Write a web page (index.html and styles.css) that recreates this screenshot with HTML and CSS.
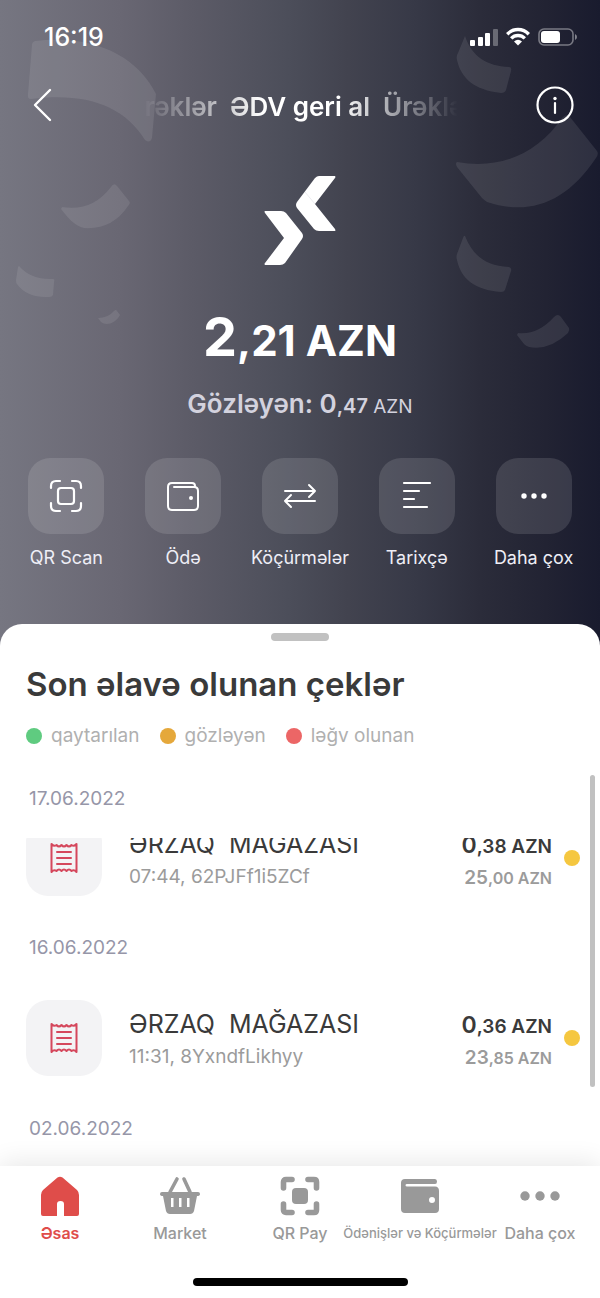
FILE: index.html
```html
<!DOCTYPE html>
<html lang="az">
<head>
<meta charset="utf-8">
<meta name="viewport" content="width=device-width, initial-scale=1">
<title>ƏDV geri al</title>
<link rel="stylesheet" href="styles.css">
</head>
<body>
<header class="hero">
  <svg class="confetti" viewBox="0 0 600 624" aria-hidden="true">
    <g fill="#fff" fill-opacity=".09">
      <path d="M35 41C92 34 137 55 156 94L152 138Q150 144 145 140C124 105 84 92 31 99Q27 99 28 94L32 45Q32 42 35 41Z"/>
      <path d="M62 207Q92 212 111 187Q114 182 117 186L129 201Q131 203 128 206Q112 230 84 228C75 226 68 218 61 209Z"/>
      <path d="M19 266Q31 280 53 279Q55 279 54 282L53 295Q52 297 49 297Q27 298 17 284Q16 283 16 280L18 267Z"/>
      <path d="M98 318Q108 318 114 311Q116 309 117 311L120 315C115 324 106 326 101 322Z"/>
      <path d="M465 36C472 57 487 66 509 67Q512 67 511 71L506 90Q505 93 501 93C474 90 461 78 457 60Q456 56 458 53Z"/>
      <path d="M457 162C501 170 538 153 562 118Q566 113 570 117L597 151Q599 154 596 158C566 203 529 216 487 202Q484 200 482 198L457 167Q455 163 457 162Z"/>
      <path d="M465 236C473 256 486 266 509 267Q512 268 511 271L505 290Q504 292 501 292C475 290 461 279 457 260Q456 257 457 254L463 238Q464 235 465 236Z"/>
      <path d="M518 333Q538 335 554 317Q558 313 561 317L569 328Q570 330 568 333Q549 351 529 347Q526 346 524 344L517 335Z"/>
    </g>
  </svg>

  <div class="status">
    <span class="clock">16:19</span>
    <div class="signals" aria-hidden="true">
      <svg width="28" height="20" viewBox="0 0 28 20" fill="#fff">
        <rect x="0" y="13" width="5" height="6" rx="1"/><rect x="8" y="10" width="5" height="9" rx="1"/><rect x="15" y="6" width="5" height="13" rx="1"/><rect x="23" y="2" width="5" height="17" rx="1" opacity=".3"/>
      </svg>
      <svg width="24" height="20" viewBox="0 0 24 20" fill="none" stroke="#fff" stroke-width="3.4">
        <path d="M1.200 7.200C7.200 1 16.800 1 22.800 7.200M5.200 11.400C9 7.600 15 7.600 18.800 11.400"/><path d="M8 14.400Q12 11.200 16 14.400L12 18.600Z" fill="#fff" stroke="none"/>
      </svg>
      <svg width="40" height="20" viewBox="0 0 40 20">
        <rect x="1" y="2" width="34" height="16" rx="5" fill="none" stroke="#fff" stroke-opacity=".4" stroke-width="1.600"/><rect x="3" y="4" width="19" height="12" rx="3" fill="#fff"/><path d="M37 7Q39 8 39 10T37 13Z" fill="#fff" opacity=".45"/>
      </svg>
    </div>
  </div>

  <div class="navbar">
    <button class="icon-button" type="button" aria-label="Geri">
      <svg width="40" height="40" viewBox="0 0 40 40" fill="none" stroke="#fff" stroke-width="2.400" stroke-linecap="round" stroke-linejoin="round"><path d="M25 5 10 20 25 35"/></svg>
    </button>
    <h1 class="ticker"><span>Ürəklər&nbsp; ƏDV geri al&nbsp; Ürəklər</span></h1>
    <button class="icon-button" type="button" aria-label="Məlumat">
      <svg width="40" height="40" viewBox="0 0 40 40" fill="none" stroke="#fff" stroke-width="2.200" stroke-linecap="round"><circle cx="20" cy="20" r="17.500"/><path d="M20 18V28"/><circle cx="20" cy="13.500" r="1.700" fill="#fff" stroke="none"/></svg>
    </button>
  </div>

  <svg class="logo" width="72" height="92" viewBox="0 0 72 92" fill="#fff" aria-hidden="true">
    <path d="M1 36H17Q20 36 22 38L38 58Q40 61 38 64L21 88Q19 90 16 90H1Q0 89 1 88L20 63 1 38Q0 36 1 36Z"/>
    <path d="M55 1H71Q72 2 71 3L51 29 71 54Q72 56 71 56H55Q52 56 50 54L33 33Q31 30 33 27L51 3Q53 1 55 1Z"/>
    <path d="M41 17 51 29" stroke="#e4e4ea" stroke-width=".7"/>
  </svg>

  <p class="balance"><span class="whole">2</span>,21 AZN</p>
  <p class="pending"><span class="pending-main">Gözləyən: 0</span><span class="pending-cents">,47</span> AZN</p>

  <div class="actions">
    <button class="action" type="button">
      <span class="action-tile"><svg width="34" height="34" viewBox="0 0 34 34" fill="none" stroke="#fff" stroke-width="2.200" stroke-linecap="round" stroke-linejoin="round"><path d="M2 9V7Q2 2 7 2H11M23 2H27Q32 2 32 7V9M32 24V27Q32 32 27 32H23M11 32H7Q2 32 2 27V24"/><rect x="9" y="9" width="16" height="16" rx="3"/></svg></span>
      <span>QR Scan</span>
    </button>
    <button class="action" type="button">
      <span class="action-tile"><svg width="34" height="34" viewBox="0 0 34 34" fill="none" stroke="#fff" stroke-width="2" stroke-linecap="round" stroke-linejoin="round"><path d="M29 8V7Q29 4 26 4H6Q2 4 2 8V27Q2 31 6 31H28Q32 31 32 27V12Q32 8 28 8H8"/><circle cx="25" cy="19" r="2" fill="#fff" stroke="none"/></svg></span>
      <span>Ödə</span>
    </button>
    <button class="action" type="button">
      <span class="action-tile"><svg width="34" height="34" viewBox="0 0 34 34" fill="none" stroke="#fff" stroke-width="2" stroke-linecap="round" stroke-linejoin="round"><path d="M2 12H32L26 6M32 12 26 18M32 22H2L8 16M2 22 8 28"/></svg></span>
      <span>Köçürmələr</span>
    </button>
    <button class="action" type="button">
      <span class="action-tile"><svg width="34" height="34" viewBox="0 0 34 34" fill="none" stroke="#fff" stroke-width="2.200" stroke-linecap="round"><path d="M4 4H30M4 12H19M4 20H14M4 28H27"/></svg></span>
      <span>Tarixçə</span>
    </button>
    <button class="action" type="button">
      <span class="action-tile"><svg width="34" height="34" viewBox="0 0 34 34" fill="#fff"><circle cx="7" cy="17" r="2.700"/><circle cx="17" cy="17" r="2.700"/><circle cx="27" cy="17" r="2.700"/></svg></span>
      <span>Daha çox</span>
    </button>
  </div>
</header>

<main class="sheet">
  <div class="grabber"></div>
  <h2 class="sheet-title">Son əlavə olunan çeklər</h2>
  <ul class="legend">
    <li><i class="dot dot-green"></i>qaytarılan</li>
    <li><i class="dot dot-orange"></i>gözləyən</li>
    <li><i class="dot dot-red"></i>ləğv olunan</li>
  </ul>
  <section class="receipts">
    <h3 class="date">17.06.2022</h3>
    <div class="scrolled">
      <article class="receipt">
        <span class="receipt-tile"><svg width="28" height="34" viewBox="0 0 28 34" fill="none" stroke="#d5475c" stroke-width="2" stroke-linejoin="round" stroke-linecap="round"><path d="M1.500 3Q4 6 6.500 4 9 7 11.500 4 14 7 16.500 4 19 7 21.500 4 24 6 26.500 3V31Q24 28 21.500 30 19 27 16.500 30 14 27 11.500 30 9 27 6.500 30 4 28 1.500 31ZM7 11H21M7 17H21M7 23H21"/></svg></span>
        <div class="receipt-text"><p class="shop">ƏRZAQ  MAĞAZASI</p><p class="meta">07:44, 62PJFf1i5ZCf</p></div>
        <div class="sums"><p class="cashback"><span>0</span>,38 AZN</p><p class="total"><span>25</span>,00 AZN</p></div>
        <i class="dot dot-yellow"></i>
      </article>
    </div>
    <h3 class="date">16.06.2022</h3>
    <article class="receipt">
      <span class="receipt-tile"><svg width="28" height="34" viewBox="0 0 28 34" fill="none" stroke="#d5475c" stroke-width="2" stroke-linejoin="round" stroke-linecap="round"><path d="M1.500 3Q4 6 6.500 4 9 7 11.500 4 14 7 16.500 4 19 7 21.500 4 24 6 26.500 3V31Q24 28 21.500 30 19 27 16.500 30 14 27 11.500 30 9 27 6.500 30 4 28 1.500 31ZM7 11H21M7 17H21M7 23H21"/></svg></span>
      <div class="receipt-text"><p class="shop">ƏRZAQ  MAĞAZASI</p><p class="meta">11:31, 8YxndfLikhyy</p></div>
      <div class="sums"><p class="cashback"><span>0</span>,36 AZN</p><p class="total"><span>23</span>,85 AZN</p></div>
      <i class="dot dot-yellow"></i>
    </article>
    <h3 class="date">02.06.2022</h3>
    <div class="scroll-thumb"></div>
  </section>
</main>

<footer class="bottom">
  <nav class="tabs">
    <a class="tab tab-active" href="#"><svg width="40" height="40" viewBox="0 0 40 40" fill="currentColor"><path d="M17.500 1.500Q20 0 22.500 1.500L37 14Q39 16 39 19V38Q39 40 37 40H24V28Q24 25 20.500 25T17 28V40H3Q1 40 1 38V19Q1 16 3 14Z"/></svg><span>Əsas</span></a>
    <a class="tab" href="#"><svg width="40" height="40" viewBox="0 0 40 40" fill="currentColor"><path d="M10 16 17 3M30 16 24 3" fill="none" stroke="currentColor" stroke-width="3.600" stroke-linecap="round"/><path fill-rule="evenodd" d="M2 16H38Q40 16 40 18T37 20L34 35Q33 38 30 38H10Q7 38 6 35L3 20Q0 20 0 18T2 16ZM11 22V31H13.500V22ZM19 22V31H21.500V22ZM27 22V31H29.500V22Z"/></svg><span>Market</span></a>
    <a class="tab" href="#"><svg width="40" height="40" viewBox="0 0 40 40" fill="none" stroke="currentColor" stroke-width="5.600" stroke-linecap="round" stroke-linejoin="round"><path d="M3.500 12V6Q3.500 3.500 6 3.500H12M28 3.500H34Q36.500 3.500 36.500 6V12M36.500 28V34Q36.500 36.500 34 36.500H28M12 36.500H6Q3.500 36.500 3.500 34V28"/><rect x="12" y="12" width="16" height="16" rx="4" fill="currentColor" stroke="none"/></svg><span>QR Pay</span></a>
    <a class="tab" href="#"><svg width="40" height="40" viewBox="0 0 40 40" fill="currentColor"><path fill-rule="evenodd" d="M5 3H35Q37 3 37 5.500T35 8H7Q5.500 8 5.500 9.200T7 10.500H35Q39 10.500 39 15V33Q39 37 35 37H5Q1 37 1 33V7Q1 3 5 3ZM32 21A3 3 0 1 0 32 27A3 3 0 1 0 32 21Z"/></svg><span class="tab-long">Ödənişlər və Köçürmələr</span></a>
    <a class="tab" href="#"><svg width="40" height="40" viewBox="0 0 40 40" fill="currentColor"><circle cx="5" cy="20" r="4.700"/><circle cx="20" cy="20" r="4.700"/><circle cx="35" cy="20" r="4.700"/></svg><span>Daha çox</span></a>
  </nav>
  <div class="home-indicator"></div>
</footer>
</body>
</html>
```
FILE: styles.css
```css
* { box-sizing: border-box; margin: 0; padding: 0; }

body {
  display: flex;
  flex-direction: column;
  min-height: 100vh;
  font-family: Inter, "Noto Sans", sans-serif;
  background: #fff;
  color: #3a3a3a;
}

button { border: 0; background: none; font: inherit; color: inherit; cursor: pointer; }
a { color: inherit; text-decoration: none; }
svg { display: block; flex: none; }

.hero {
  position: relative;
  display: flex;
  flex-direction: column;
  align-items: center;
  padding-bottom: 78px;
  color: #fff;
  background: linear-gradient(90deg, #767681 0%, #696773 20%, #5c5b67 32%, #4c4e5a 48%, #42434f 58%, #373947 69%, #2b2c3a 80%, #222333 91%, #191b2e 100%);
}
.confetti { position: absolute; top: 0; left: 0; width: 100%; }
.hero > :not(.confetti) { position: relative; }

.status {
  display: flex;
  align-self: stretch;
  justify-content: space-between;
  align-items: center;
  height: 74px;
  padding: 0 22px 0 44px;
}
.clock { font-size: 25px; font-weight: 500; }
.signals { display: flex; align-items: center; gap: 8px; }

.navbar {
  display: flex;
  align-self: stretch;
  justify-content: space-between;
  align-items: center;
  height: 62px;
  padding: 0 25px;
}
.ticker {
  display: flex;
  justify-content: center;
  flex: 0 1 316px;
  padding-top: 3px;
  overflow: hidden;
  white-space: nowrap;
  font-size: 26px;
  line-height: 36px;
  font-weight: 600;
  -webkit-mask-image: linear-gradient(90deg, transparent, #000 38%, #000 62%, transparent);
  mask-image: linear-gradient(90deg, transparent, #000 38%, #000 62%, transparent);
}

.logo { margin-top: 39px; }
.balance { margin-top: 38px; font-size: 42px; line-height: 64px; font-weight: 700; white-space: nowrap; }
.whole { font-size: 54px; }
.pending { margin-top: 14px; font-size: 19px; line-height: 34px; color: #d3d2de; white-space: nowrap; }
.pending-main { font-size: 26px; font-weight: 600; }
.pending-cents { font-size: 20px; font-weight: 600; }

.actions { display: flex; align-self: stretch; justify-content: space-around; margin-top: 34px; padding: 0 8px; }
.action {
  display: flex;
  flex: 1 1 0;
  flex-direction: column;
  align-items: center;
  gap: 12px;
  font-size: 18px;
  line-height: 24px;
  white-space: nowrap;
  color: #eeeef6;
}
.action-tile {
  display: grid;
  place-items: center;
  width: 76px;
  height: 76px;
  border-radius: 22px;
  background: rgba(255, 255, 255, .12);
}

.sheet {
  position: relative;
  flex: 1;
  margin-top: -24px;
  padding-top: 9px;
  border-radius: 22px 22px 0 0;
  background: #fff;
}
.grabber { width: 58px; height: 8px; margin: 0 auto; border-radius: 4px; background: #c1c1c1; }
.sheet-title { margin: 21px 26px 0; font-size: 33px; line-height: 44px; font-weight: 600; white-space: nowrap; }
.legend { display: flex; gap: 20px; margin: 17px 26px 0; list-style: none; font-size: 19px; line-height: 26px; color: #b0b0b0; }
.legend li { display: flex; align-items: center; gap: 9px; }

.dot { width: 16px; height: 16px; flex: none; border-radius: 50%; }
.dot-green { background: #5fcb80; }
.dot-orange { background: #e5a83b; }
.dot-red { background: #ec6666; }
.dot-yellow { background: #f5c740; }

.receipts { position: relative; margin-top: 26px; padding: 0 20px 0 26px; }
.date { padding: 12px 3px 0; font-size: 19px; line-height: 24px; font-weight: 400; color: #9696a8; }
.scrolled { display: flex; flex-direction: column; justify-content: flex-end; height: 58px; margin: 27px 0 28px; overflow: hidden; }
.receipt { display: flex; align-items: center; flex: none; height: 76px; }
.date + .receipt { margin: 40px 0 29px; }
.receipt-tile { display: grid; place-items: center; width: 76px; height: 76px; border-radius: 22px; background: #f3f3f5; }
.receipt-text { flex: 1; padding: 2px 0 0 27px; }
.shop { font-size: 25px; line-height: 36px; white-space: pre; }
.meta { font-size: 19px; line-height: 30px; color: #9b9b9b; }
.sums { padding: 8px 12px 0 0; text-align: right; font-weight: 600; white-space: nowrap; }
.cashback { font-size: 19px; line-height: 30px; }
.cashback span { font-size: 23px; }
.total { font-size: 16px; line-height: 32px; color: #9b9b9b; }
.total span { font-size: 19px; }
.scroll-thumb { position: absolute; top: 0; right: 5px; width: 5px; height: 312px; border-radius: 3px; background: #c1c1c1; }

.bottom {
  position: relative;
  padding: 10px 0 12px;
  background: #fff;
  box-shadow: 0 -4px 24px rgba(0, 0, 0, .09);
}
.tabs { display: flex; }
.tab {
  display: flex;
  flex: 1 1 0;
  min-width: 0;
  flex-direction: column;
  align-items: center;
  gap: 6px;
  font-size: 16px;
  line-height: 22px;
  font-weight: 500;
  white-space: nowrap;
  color: #999;
}
.tab-active { color: #df4d4a; font-weight: 600; }
.tab-long { font-size: 13px; }
.home-indicator { width: 215px; height: 8px; margin: 34px auto 0; border-radius: 4px; background: #000; }
```
